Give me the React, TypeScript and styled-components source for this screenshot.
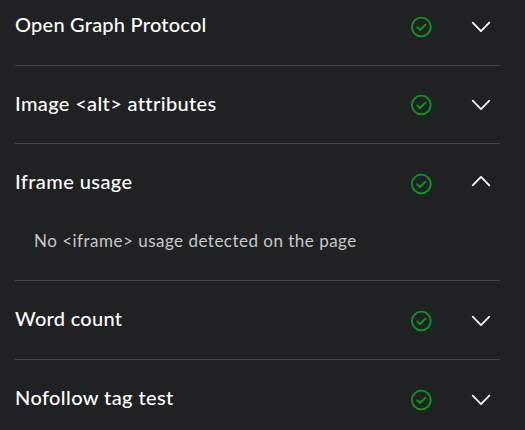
import React from "react";
import styled, { createGlobalStyle } from "styled-components";

const Global = createGlobalStyle`
  body { margin: 0; background: #202123; overflow: hidden; }
`;
const Panel = styled.main`
  box-sizing: border-box;
  width: 525px;
  height: 430px;
  padding: 0 25px 0 15px;
  overflow: hidden;
  background: #202123;
  color: #fff;
  font-family: Lato, "Noto Sans", sans-serif;
`;
const Item = styled.section<{ $height: number }>`
  box-sizing: border-box;
  height: ${(p) => p.$height}px;
  border-bottom: 1px solid #444547;
  &:first-child { margin-top: -12px; }
`;
const Header = styled.div`
  display: grid;
  grid-template-columns: 1fr 22px 20px;
  column-gap: 39px;
  align-items: center;
  height: 78px;
  padding-right: 9px;
`;
const Title = styled.h2<{ $spacing: number; $lift: number }>`
  margin: 0;
  padding-bottom: ${(p) => p.$lift * 2}px;
  font-size: 20px;
  font-weight: 500;
  line-height: 28px;
  letter-spacing: ${(p) => p.$spacing}px;
  white-space: nowrap;
`;
const Detail = styled.p`
  margin: 7px 0 0 19px;
  font-size: 17px;
  line-height: 24px;
  letter-spacing: 0.49px;
  color: #c8c9ca;
  white-space: nowrap;
`;
const Icon = styled.svg<{ $drop: number }>`
  display: block;
  margin-top: ${(p) => p.$drop * 2}px;
  fill: none;
  stroke-linecap: round;
  stroke-linejoin: round;
`;

type Check = {
  title: string;
  spacing: number;
  lift: number;
  drop: number;
  height: number;
  detail?: string;
};

const items: Check[] = [
  { title: "Open Graph Protocol", spacing: 0.23, lift: 3, drop: 0.4, height: 78 },
  { title: "Image <alt> attributes", spacing: 0.36, lift: 2, drop: 0.4, height: 78 },
  { title: "Iframe usage", spacing: 0.42, lift: 2, drop: 1, height: 137, detail: "No <iframe> usage detected on the page" },
  { title: "Word count", spacing: 0.28, lift: 2, drop: 1.2, height: 79 },
  { title: "Nofollow tag test", spacing: 0.4, lift: 2, drop: 0.8, height: 79 },
];

export default function App() {
  return (
    <Panel>
      <Global />
      {items.map((item) => (
        <Item key={item.title} $height={item.height}>
          <Header>
            <Title $spacing={item.spacing} $lift={item.lift}>{item.title}</Title>
            <Icon $drop={item.drop} width="22" height="22" viewBox="0 0 22 22" stroke="#069e20" strokeWidth="1.8">
              <circle cx="11.3" cy="11" r="9.4" />
              <path d="M7.2 11.3 10 14 15.5 8.6" />
            </Icon>
            <Icon $drop={item.detail ? -2 : item.drop} width="20" height="12" viewBox="0 0 20 12" stroke="#fff" strokeWidth="1.8">
              <path d={item.detail ? "M1.7 10.3 10 1.9 18.3 10.3" : "M1.7 1.7 10 10.1 18.3 1.7"} />
            </Icon>
          </Header>
          {item.detail && <Detail>{item.detail}</Detail>}
        </Item>
      ))}
    </Panel>
  );
}
